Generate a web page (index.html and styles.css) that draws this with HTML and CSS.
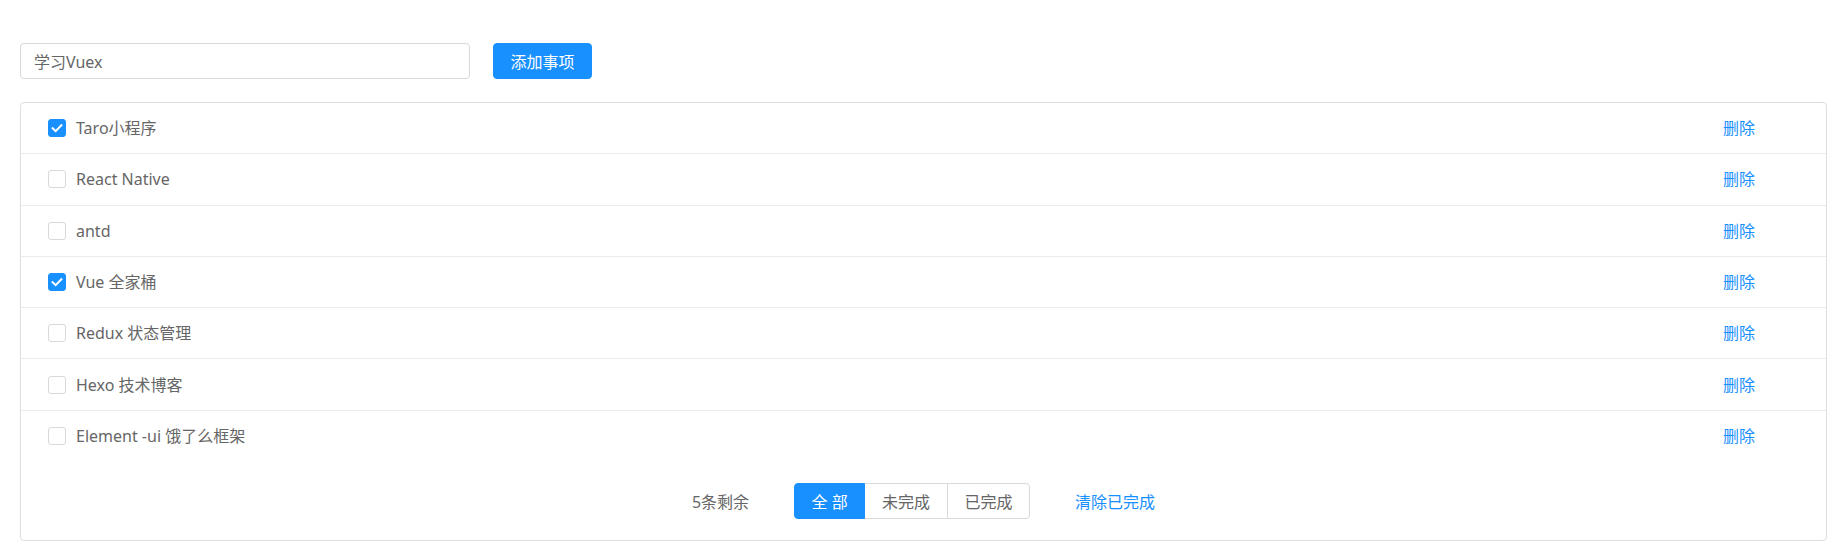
FILE: index.html
```html
<!DOCTYPE html>
<html lang="zh-CN">
<head>
<meta charset="utf-8">
<title>Todo</title>
<link rel="stylesheet" href="styles.css">
</head>
<body>
<div class="app">
  <div class="add-bar">
    <input class="add-input" type="text" value="学习Vuex">
    <button class="btn-primary" type="button">添加事项</button>
  </div>
  <div class="todo-box">
    <ul class="todo-list">
      <li class="todo-item">
        <label class="todo-label"><span class="cb cb-checked"><svg viewBox="0 0 18 18" width="18" height="18"><path d="M4.6 9.2 L7.7 12.2 L13.4 6.2" fill="none" stroke="#fff" stroke-width="2" stroke-linecap="square"/></svg></span><span class="todo-text">Taro小程序</span></label>
        <a class="del-link">删除</a>
      </li>
      <li class="todo-item">
        <label class="todo-label"><span class="cb"></span><span class="todo-text">React Native</span></label>
        <a class="del-link">删除</a>
      </li>
      <li class="todo-item">
        <label class="todo-label"><span class="cb"></span><span class="todo-text">antd</span></label>
        <a class="del-link">删除</a>
      </li>
      <li class="todo-item">
        <label class="todo-label"><span class="cb cb-checked"><svg viewBox="0 0 18 18" width="18" height="18"><path d="M4.6 9.2 L7.7 12.2 L13.4 6.2" fill="none" stroke="#fff" stroke-width="2" stroke-linecap="square"/></svg></span><span class="todo-text">Vue 全家桶</span></label>
        <a class="del-link">删除</a>
      </li>
      <li class="todo-item">
        <label class="todo-label"><span class="cb"></span><span class="todo-text">Redux 状态管理</span></label>
        <a class="del-link">删除</a>
      </li>
      <li class="todo-item">
        <label class="todo-label"><span class="cb"></span><span class="todo-text">Hexo 技术博客</span></label>
        <a class="del-link">删除</a>
      </li>
      <li class="todo-item">
        <label class="todo-label"><span class="cb"></span><span class="todo-text">Element -ui 饿了么框架</span></label>
        <a class="del-link">删除</a>
      </li>
    </ul>
    <div class="todo-footer">
      <span class="remain">5条剩余</span>
      <div class="filter-group">
        <button class="filter-btn filter-active" type="button">全 部</button>
        <button class="filter-btn" type="button">未完成</button>
        <button class="filter-btn" type="button">已完成</button>
      </div>
      <a class="clear-link">清除已完成</a>
    </div>
  </div>
</div>
</body>
</html>
```

FILE: styles.css
```css
* { box-sizing: border-box; }
html, body { margin: 0; padding: 0; background: #fff; }
body {
  font-family: "Noto Sans", "Noto Sans CJK SC", sans-serif;
  font-size: 16px;
  color: #666;
}
.app {
  padding: 43px 21px 0 20px;
}
.add-bar {
  display: flex;
  align-items: center;
  gap: 23px;
}
.add-input {
  width: 450px;
  height: 36px;
  border: 1px solid #d9d9d9;
  border-radius: 4px;
  padding: 0 13px;
  font: inherit;
  font-size: 16px;
  color: #666;
  outline: none;
}
.btn-primary {
  height: 36px;
  width: 99px;
  padding: 0;
  border: 1px solid #1890ff;
  background: #1890ff;
  color: #fff;
  border-radius: 4px;
  font: inherit;
  font-size: 16px;
}
.todo-box {
  margin-top: 23px;
  border: 1px solid #dedede;
  border-radius: 4px;
}
.todo-list {
  list-style: none;
  margin: 0;
  padding: 0;
}
.todo-item {
  display: flex;
  align-items: center;
  justify-content: space-between;
  height: 51.3px;
  padding: 0 71px 0 27px;
  border-bottom: 1px solid #ebebeb;
}
.todo-item:last-child {
  border-bottom: none;
  height: 50.3px;
}
.todo-label {
  display: flex;
  align-items: center;
  gap: 10px;
}
.cb {
  width: 18px;
  height: 18px;
  border: 1px solid #d9d9d9;
  border-radius: 3px;
  background: #fff;
  display: flex;
  align-items: center;
  justify-content: center;
}
.cb-checked {
  background: #1890ff;
  border-color: #1890ff;
}
.cb svg { display: block; flex: none; }
.todo-text {
  color: #666;
  line-height: 24px;
}
.del-link {
  color: #1890ff;
  cursor: pointer;
  line-height: 24px;
}
.todo-footer {
  display: flex;
  align-items: center;
  justify-content: center;
  gap: 45px;
  height: 79px;
}
.remain {
  color: #666;
}
.filter-group {
  display: flex;
  height: 36px;
}
.filter-btn {
  height: 36px;
  padding: 0 16px;
  border: 1px solid #d9d9d9;
  background: #fff;
  color: #666;
  font: inherit;
  font-size: 16px;
  margin-left: -1px;
}
.filter-btn:first-child {
  margin-left: 0;
  border-radius: 4px 0 0 4px;
  width: 71px;
}
.filter-btn:last-child {
  border-radius: 0 4px 4px 0;
  width: 83px;
}
.filter-btn:nth-child(2) { width: 84px; }
.filter-active {
  background: #1890ff;
  border-color: #1890ff;
  color: #fff;
  position: relative;
}
.clear-link {
  color: #1890ff;
  cursor: pointer;
}
```
